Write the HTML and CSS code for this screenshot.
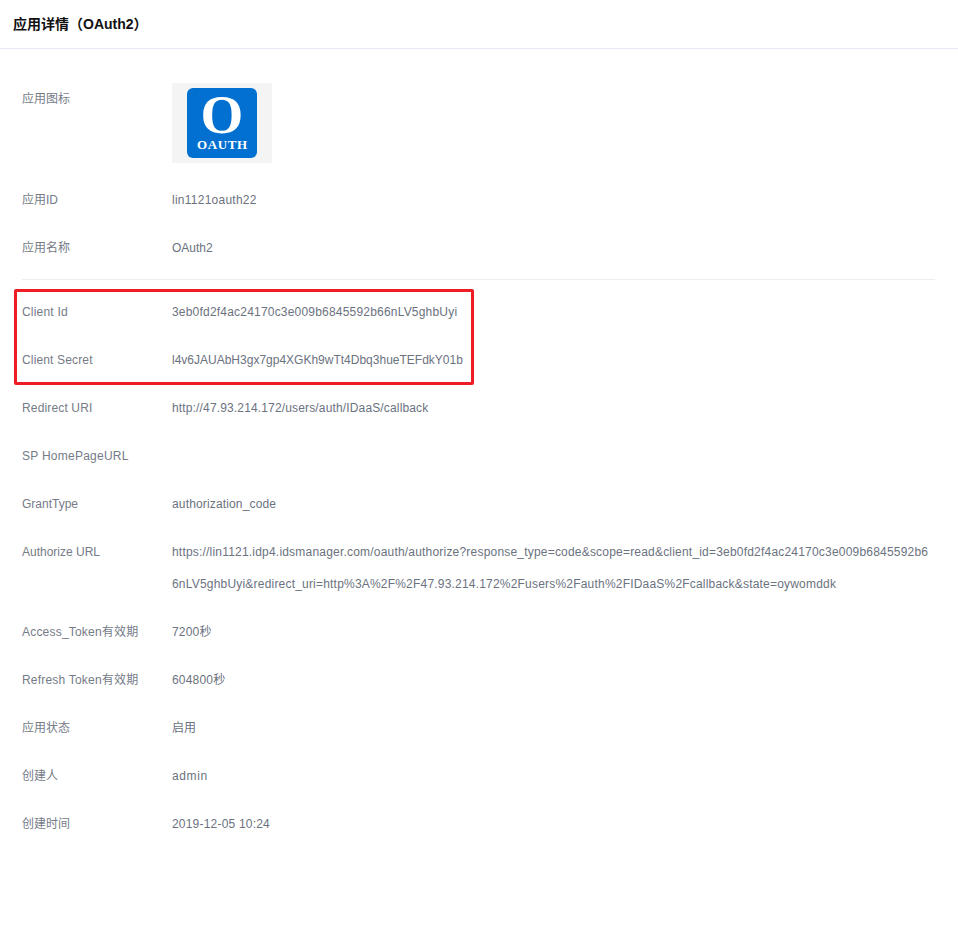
FILE: index.html
```html
<!DOCTYPE html>
<html lang="zh-CN">
<head>
<meta charset="utf-8">
<title>应用详情（OAuth2）</title>
<link rel="stylesheet" href="styles.css">
</head>
<body>
<header class="page-head"><h1 class="page-title">应用详情（OAuth2）</h1></header>
<main class="detail">
  <section class="group">
    <div class="row row-icon">
      <div class="label">应用图标</div>
      <div class="value">
        <div class="icon-frame">
          <svg class="oauth-logo" viewBox="0 0 70 70" width="70" height="70" role="img" aria-label="OAuth">
            <rect class="logo-bg" width="70" height="70" rx="6"></rect>
            <text class="logo-o" x="35" y="44.5" text-anchor="middle">O</text>
            <text class="logo-text" x="35" y="61" text-anchor="middle" textLength="50" lengthAdjust="spacing">OAUTH</text>
          </svg>
        </div>
      </div>
    </div>
    <div class="row"><div class="label">应用ID</div><div class="value tr-4">lin1121oauth22</div></div>
    <div class="row"><div class="label">应用名称</div><div class="value">OAuth2</div></div>
  </section>
  <hr class="divider">
  <section class="group highlighted">
    <div class="row"><div class="label tr-3">Client Id</div><div class="value tr-3">3eb0fd2f4ac24170c3e009b6845592b66nLV5ghbUyi</div></div>
    <div class="row"><div class="label tr-2">Client Secret</div><div class="value">l4v6JAUAbH3gx7gp4XGKh9wTt4Dbq3hueTEFdkY01b</div></div>
  </section>
  <section class="group">
    <div class="row"><div class="label tr-2">Redirect URI</div><div class="value tr-2">http://47.93.214.172/users/auth/IDaaS/callback</div></div>
    <div class="row"><div class="label tr-4">SP HomePageURL</div><div class="value"></div></div>
    <div class="row"><div class="label">GrantType</div><div class="value tr-2">authorization_code</div></div>
    <div class="row"><div class="label">Authorize URL</div><div class="value tr-3 url">https://lin1121.idp4.idsmanager.com/oauth/authorize?response_type=code&amp;scope=read&amp;client_id=3eb0fd2f4ac24170c3e009b6845592b66nLV5ghbUyi&amp;redirect_uri=http%3A%2F%2F47.93.214.172%2Fusers%2Fauth%2FIDaaS%2Fcallback&amp;state=oywomddk</div></div>
    <div class="row"><div class="label tr-3">Access_Token有效期</div><div class="value tr-3">7200秒</div></div>
    <div class="row"><div class="label tr-3">Refresh Token有效期</div><div class="value tr-3">604800秒</div></div>
    <div class="row"><div class="label">应用状态</div><div class="value">启用</div></div>
    <div class="row"><div class="label">创建人</div><div class="value tr-6">admin</div></div>
    <div class="row"><div class="label">创建时间</div><div class="value tr-3">2019-12-05 10:24</div></div>
  </section>
</main>
</body>
</html>
```
FILE: styles.css
```css
*, *::before, *::after { box-sizing: border-box; }
html, body { margin: 0; padding: 0; background: #fff; }
body {
  font-family: "Liberation Sans", "Noto Sans CJK SC", sans-serif;
  font-size: 12px;
  color: #6b7280;
}
.page-head {
  height: 49px;
  padding: 0 13px 2px;
  display: flex;
  align-items: center;
  border-bottom: 1px solid #e4e9f4;
}
.page-title {
  margin: 0;
  font-size: 14px;
  font-weight: 700;
  color: #111;
}
.detail {
  padding: 34px 22px 0;
  width: 957px;
}
.group { display: flex; flex-direction: column; gap: 16px; }
.group + .group { margin-top: 16px; }
.row {
  display: flex;
  line-height: 32px;
}
.row-icon { margin-bottom: 5px; }
.label { width: 150px; flex: none; color: #757b87; }
.value { flex: 1; min-width: 0; color: #6b7280; word-break: break-all; }
.url { padding-right: 4px; }
.tr-2 { letter-spacing: 0.15px; }
.tr-3 { letter-spacing: 0.2px; }
.tr-4 { letter-spacing: 0.25px; }
.tr-6 { letter-spacing: 0.6px; }
.icon-frame {
  width: 100px;
  height: 80px;
  background: #f4f4f4;
  padding-top: 5px;
  display: flex;
  justify-content: center;
  align-items: flex-start;
}
.oauth-logo { display: block; overflow: visible; }
.logo-bg { fill: #0170d0; }
.logo-o, .logo-text {
  fill: #fff;
  font-family: "Liberation Serif", serif;
  font-weight: 700;
}
.logo-o { font-size: 55px; }
.logo-text { font-size: 13px; }
.divider {
  margin: 15px 0 16px;
  border: 0;
  border-top: 1px solid #eceef2;
}
.highlighted { position: relative; }
.highlighted::after {
  content: "";
  position: absolute;
  left: -8px;
  top: -7px;
  width: 460px;
  height: 96px;
  border: 3px solid #ee1c25;
  border-radius: 2px;
  pointer-events: none;
}
```
